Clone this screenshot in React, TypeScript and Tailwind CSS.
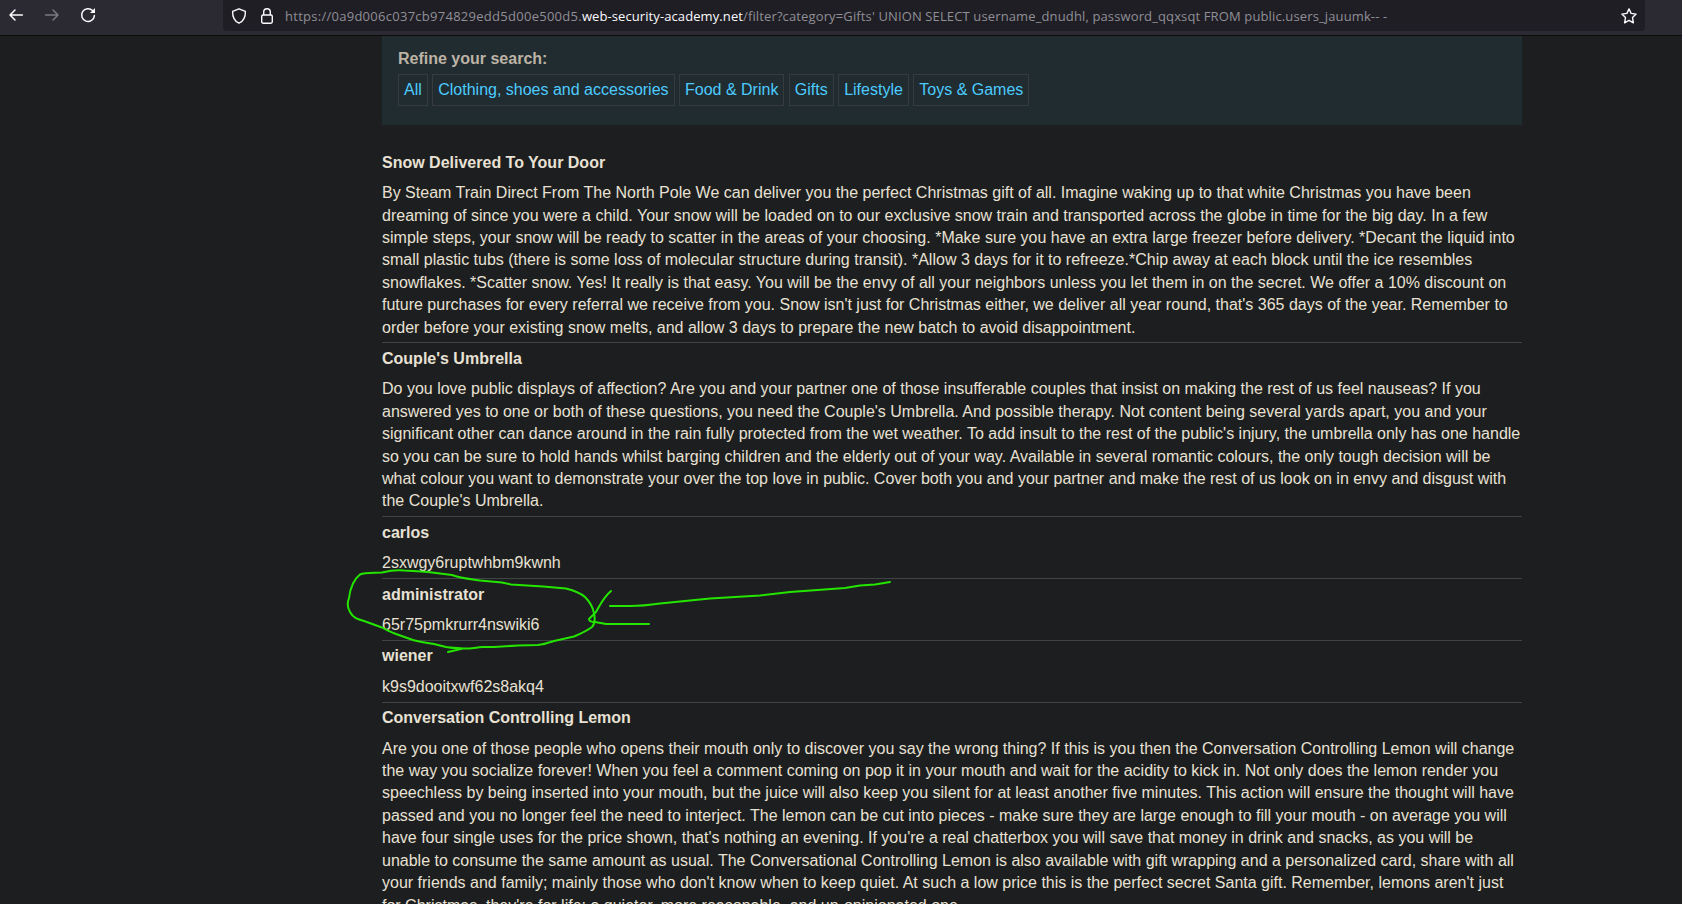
import React from "react";

const categories = ["All", "Clothing, shoes and accessories", "Food & Drink", "Gifts", "Lifestyle", "Toys & Games"];

const rows = [
  {
    name: "Snow Delivered To Your Door",
    text: "By Steam Train Direct From The North Pole We can deliver you the perfect Christmas gift of all. Imagine waking up to that white Christmas you have been dreaming of since you were a child. Your snow will be loaded on to our exclusive snow train and transported across the globe in time for the big day. In a few simple steps, your snow will be ready to scatter in the areas of your choosing. *Make sure you have an extra large freezer before delivery. *Decant the liquid into small plastic tubs (there is some loss of molecular structure during transit). *Allow 3 days for it to refreeze.*Chip away at each block until the ice resembles snowflakes. *Scatter snow. Yes! It really is that easy. You will be the envy of all your neighbors unless you let them in on the secret. We offer a 10% discount on future purchases for every referral we receive from you. Snow isn't just for Christmas either, we deliver all year round, that's 365 days of the year. Remember to order before your existing snow melts, and allow 3 days to prepare the new batch to avoid disappointment.",
  },
  {
    name: "Couple's Umbrella",
    text: "Do you love public displays of affection? Are you and your partner one of those insufferable couples that insist on making the rest of us feel nauseas? If you answered yes to one or both of these questions, you need the Couple's Umbrella. And possible therapy. Not content being several yards apart, you and your significant other can dance around in the rain fully protected from the wet weather. To add insult to the rest of the public's injury, the umbrella only has one handle so you can be sure to hold hands whilst barging children and the elderly out of your way. Available in several romantic colours, the only tough decision will be what colour you want to demonstrate your over the top love in public. Cover both you and your partner and make the rest of us look on in envy and disgust with the Couple's Umbrella.",
  },
  { name: "carlos", text: "2sxwgy6ruptwhbm9kwnh" },
  { name: "administrator", text: "65r75pmkrurr4nswiki6" },
  { name: "wiener", text: "k9s9dooitxwf62s8akq4" },
  {
    name: "Conversation Controlling Lemon",
    text: "Are you one of those people who opens their mouth only to discover you say the wrong thing? If this is you then the Conversation Controlling Lemon will change the way you socialize forever! When you feel a comment coming on pop it in your mouth and wait for the acidity to kick in. Not only does the lemon render you speechless by being inserted into your mouth, but the juice will also keep you silent for at least another five minutes. This action will ensure the thought will have passed and you no longer feel the need to interject. The lemon can be cut into pieces - make sure they are large enough to fill your mouth - on average you will have four single uses for the price shown, that's nothing an evening. If you're a real chatterbox you will save that money in drink and snacks, as you will be unable to consume the same amount as usual. The Conversational Controlling Lemon is also available with gift wrapping and a personalized card, share with all your friends and family; mainly those who don't know when to keep quiet. At such a low price this is the perfect secret Santa gift. Remember, lemons aren't just for Christmas, they're for life; a quieter, more reasonable, and un-opinionated one.",
  },
];

function Toolbar() {
  return (
    <header className="flex h-9 shrink-0 items-start border-b border-[#0c0c0d] bg-[#2b2a33] text-[#fbfbfe]">
      <div className="flex w-[223px] shrink-0 items-center gap-5 pt-[7px] pl-2">
        <svg className="size-4" viewBox="0 0 16 16" fill="none" stroke="currentColor" strokeWidth="1.5" strokeLinecap="round" strokeLinejoin="round">
          <path d="M14.4 8H2M7 3 2 8l5 5" />
        </svg>
        <svg className="size-4 text-[#7b7a81]" viewBox="0 0 16 16" fill="none" stroke="currentColor" strokeWidth="1.5" strokeLinecap="round" strokeLinejoin="round">
          <path d="M1.6 8H14M9 3l5 5-5 5" />
        </svg>
        <svg className="size-4" viewBox="0 0 16 16" fill="none" stroke="currentColor" strokeWidth="1.5" strokeLinecap="round">
          <path d="M12.6 3.6A6.4 6.4 0 1 0 14.4 8.6" />
          <path d="M15 1v5h-5z" fill="currentColor" stroke="none" />
        </svg>
      </div>
      <div className="flex h-[31px] w-[1422px] shrink-0 items-center rounded-b bg-[#1f1e25] pl-2">
        <svg className="size-4 shrink-0" viewBox="0 0 16 16" fill="none" stroke="currentColor" strokeWidth="1.4" strokeLinejoin="round">
          <path d="M8 .8 14.4 3.4C14.5 8 13.2 12.8 8 15.2 2.8 12.8 1.5 8 1.6 3.4z" />
        </svg>
        <svg className="ml-3 size-4 shrink-0" viewBox="0 0 16 16" fill="none" stroke="currentColor" strokeWidth="1.4">
          <rect x="2.7" y="7" width="10.6" height="8.2" rx="1.4" />
          <path d="M4.7 7V4a3.3 3.3 0 0 1 6.6 0v3" />
        </svg>
        <div className="ml-[10px] flex-1 pt-[2px] font-['Open_Sans',sans-serif] text-[13px] whitespace-nowrap text-[#8f8f96]">
          <span className="tracking-[0.27px]">https://0a9d006c037cb974829edd5d00e500d5.</span>
          <span className="tracking-[0.09px] text-[#fbfbfe]">web-security-academy.net</span>
          <span className="tracking-[0.13px]">/filter?category=Gifts' UNION SELECT username_dnudhl, password_qqxsqt FROM public.users_jauumk-- -</span>
        </div>
        <svg className="mr-2 size-4 shrink-0" viewBox="0 0 16 16" fill="none" stroke="currentColor" strokeWidth="1.4" strokeLinejoin="round">
          <path d="m8 .9 2.1 4.5 5 .7-3.6 3.5.9 5.2L8 12.3l-4.4 2.5.9-5.2L.9 6.1l5-.7z" />
        </svg>
      </div>
    </header>
  );
}

function Annotation() {
  return (
    <svg className="pointer-events-none absolute top-[560px] left-[340px]" width="560" height="100" viewBox="340 560 560 100" fill="none" stroke="#24e500" strokeWidth="2" strokeLinecap="round" strokeLinejoin="round">
      <path d="M448 652 463 648.500M463 648.500C457 648 451 648 446 647L434 644C427 643 420 642 413 640L396 634C391 632 386 630 382 627.500L364 621C358 619.500 353 618 350 612C347 607 347 603 349 598C350 590 353 580 360 574.500C365 572 374 573 382 572.500C390 570.500 397 569.500 404 570.500C414 571 424 571.500 432 572.500L452 575C460 578 470 579 480 580.500L502 582.500 511 584.500 543 586.500 566 588.500C574 590.500 580 592.500 585 597C590 602 593 608 594 613C595 618 595 624 592 627C588 630 580 634 574 636.500L554 641C548 643 544 644.500 538 645L518 645.500 494 647 482 647C476 647.500 469 649 463 648.500" />
      <path d="M611 591C603 598 600 605 596 612L589 619C589 621 591 622 595 622L606 624H649" />
      <path d="M610 606H630C640 606 650 605 660 603.500L710 598.500 760 595.500 790 592 845 588 860 585.500 875 584.500 890 582" />
    </svg>
  );
}

export default function App() {
  return (
    <div className="relative flex h-[904px] w-[1682px] flex-col overflow-hidden bg-[#1c1e1f] font-['Liberation_Sans',Arial,sans-serif] text-base text-[#e8e1d4]">
      <Toolbar />
      <main className="ml-[382px] w-[1140px] leading-[22.4px]">
        <section className="h-[89px] bg-[#202c30] pt-[11.8px] pl-4">
          <h2 className="font-bold text-[#bdb3a5]">Refine your search:</h2>
          <nav className="mt-[4.2px] flex gap-[4.45px]">
            {categories.map((c) => (
              <a key={c} className="flex h-8 items-center border border-[#363b3d] px-[5px] text-[#4dcbff]">
                {c}
              </a>
            ))}
          </nav>
        </section>
        <div className="pt-[21px]">
          {rows.map((r, i) => (
            <article key={r.name} className={i === 0 ? "pt-[5.8px] pb-[3.4px]" : "border-t border-[#414447] pt-[4.6px] pb-[3.4px]"}>
              <h3 className="font-bold">{r.name}</h3>
              <p className="mt-2">{r.text}</p>
            </article>
          ))}
        </div>
      </main>
      <Annotation />
    </div>
  );
}
